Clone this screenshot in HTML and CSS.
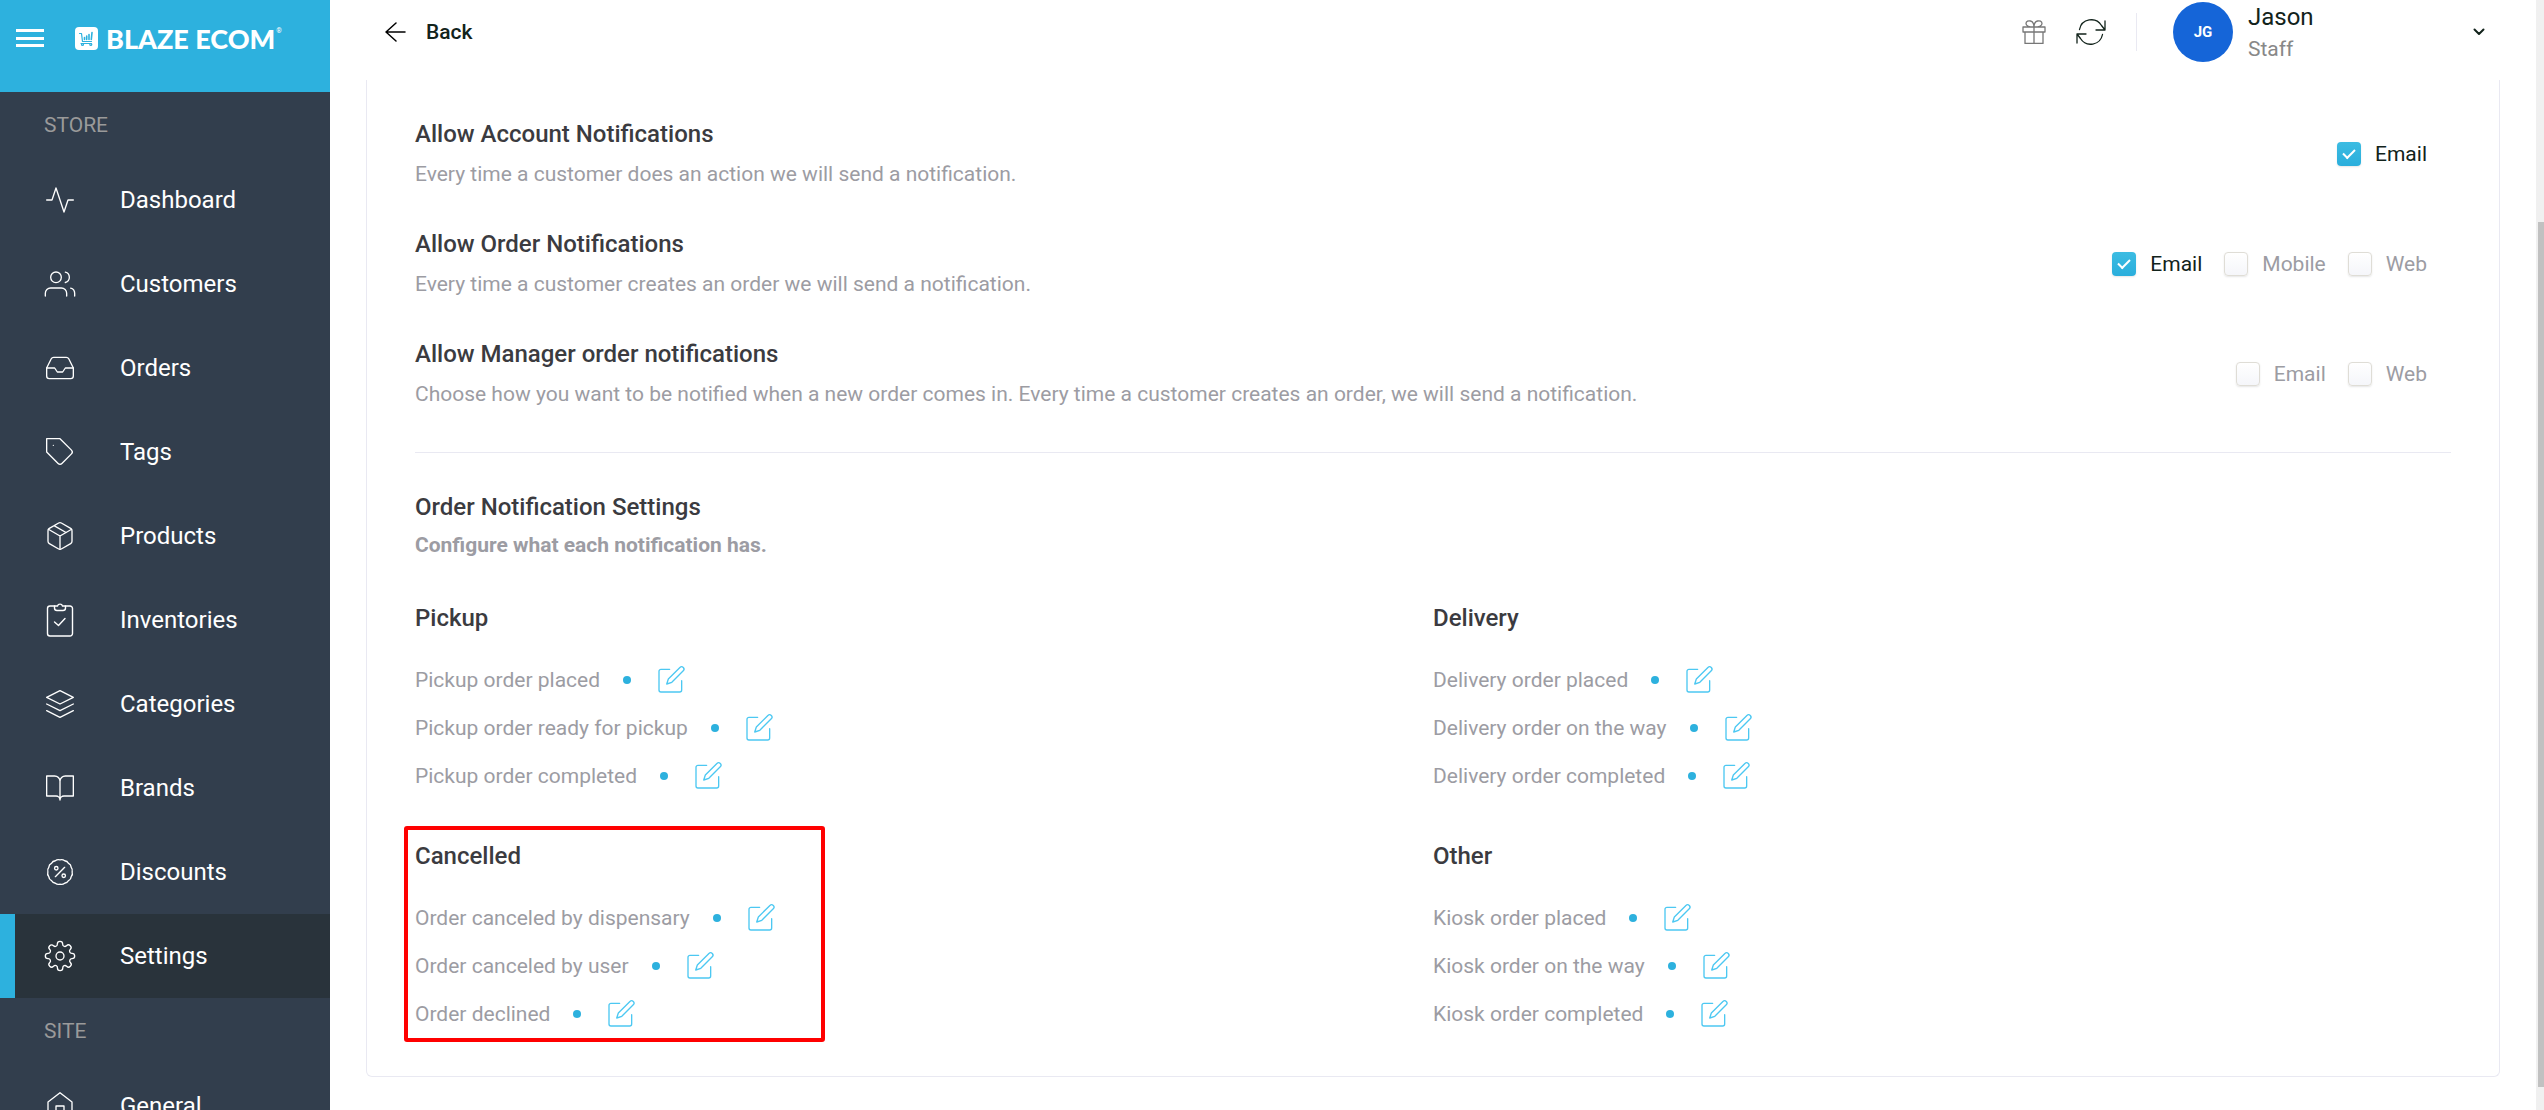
FILE: index.html
```html
<!DOCTYPE html>
<html lang="en">
<head>
  <meta charset="UTF-8">
  <meta name="viewport" content="width=device-width, initial-scale=1">
  <title>Notifications - Blaze Ecom</title>
  <link rel="stylesheet" href="styles.css">
</head>
<body>

<!-- Shared edit icon -->
<svg class="sprite" aria-hidden="true">
  <symbol id="icon-edit" viewBox="0 0 24 24">
    <path d="M11 4H4.500a1.500 1.500 0 0 0-1.500 1.500v14a1.500 1.500 0 0 0 1.500 1.500h14a1.500 1.500 0 0 0 1.500-1.500V12.500"/>
    <path d="M18.700 2.600a1.700 1.700 0 0 1 2.500 2.500L12.600 13.700 8.800 15l1.200-3.800z"/>
  </symbol>
</svg>

<div class="app">

  <!-- Sidebar -->
  <aside class="sidebar">
    <div class="brand">
      <button class="menu-btn" type="button" aria-label="Menu"><span></span><span></span><span></span></button>
      <a class="logo" href="#">
        <svg width="23" height="23" viewBox="0 0 23 23" aria-hidden="true">
          <rect width="23" height="23" rx="4" fill="#fff"/>
          <g fill="none" stroke="#2db1de" stroke-width="1.2" stroke-linecap="round">
            <path d="M4.500 6.500H6.500L7.500 14.500H16.500M6 16.500H16.500"/>
            <path d="M9.500 12.500V10.500M11.700 12.500V9M14 12.500V7.500M16.300 12.500L17 5.500" stroke-width="1.600"/>
            <circle cx="7.500" cy="17.500" r="1"/>
            <circle cx="15.800" cy="17.500" r="1"/>
          </g>
        </svg>
        <span class="logo-text">BLAZE ECOM</span><span class="reg">®</span>
      </a>
    </div>

    <nav>
      <h6 class="nav-title">STORE</h6>
      <a class="nav-item" href="#">
        <svg viewBox="0 0 24 24"><path d="M22 12h-4l-3 9L9 3l-3 9H2"/></svg>
        Dashboard
      </a>
      <a class="nav-item" href="#">
        <svg viewBox="0 0 24 24"><path d="M17 21v-2a4 4 0 0 0-4-4H5a4 4 0 0 0-4 4v2"/><circle cx="9" cy="7" r="4"/><path d="M23 21v-2a4 4 0 0 0-3-3.870M16 3.130a4 4 0 0 1 0 7.750"/></svg>
        Customers
      </a>
      <a class="nav-item" href="#">
        <svg viewBox="0 0 24 24"><path d="M22 12h-6l-2 3h-4l-2-3H2"/><path d="M5.450 5.110L2 12v6a2 2 0 0 0 2 2h16a2 2 0 0 0 2-2v-6l-3.450-6.890A2 2 0 0 0 16.760 4H7.240a2 2 0 0 0-1.790 1.110z"/></svg>
        Orders
      </a>
      <a class="nav-item" href="#">
        <svg viewBox="0 0 24 24"><path d="M20.590 13.410l-7.170 7.170a2 2 0 0 1-2.830 0L2 12V2h10l8.590 8.590a2 2 0 0 1 0 2.820zM7 7h.01"/></svg>
        Tags
      </a>
      <a class="nav-item" href="#">
        <svg viewBox="0 0 24 24"><path d="M16.500 9.400l-9-5.190M21 16V8a2 2 0 0 0-1-1.730l-7-4a2 2 0 0 0-2 0l-7 4A2 2 0 0 0 3 8v8a2 2 0 0 0 1 1.730l7 4a2 2 0 0 0 2 0l7-4A2 2 0 0 0 21 16z"/><path d="M3.270 6.960L12 12.010l8.730-5.050M12 22.080V12"/></svg>
        Products
      </a>
      <a class="nav-item" href="#">
        <svg class="tall" viewBox="0 0 32 36"><path d="M10.500 4H6a2.500 2.500 0 0 0-2.500 2.500v25A2.500 2.500 0 0 0 6 34h20a2.500 2.500 0 0 0 2.500-2.500v-25A2.500 2.500 0 0 0 26 4h-4.500"/><path d="M10.500 4h3a2.600 2.600 0 0 1 5 0h3v2a2.500 2.500 0 0 1-2.500 2.500h-6A2.500 2.500 0 0 1 10.500 6z"/><path d="M10.500 20l4 3.500 6.500-7"/></svg>
        Inventories
      </a>
      <a class="nav-item" href="#">
        <svg viewBox="0 0 24 24"><path d="M12 2L2 7l10 5 10-5-10-5zM2 17l10 5 10-5M2 12l10 5 10-5"/></svg>
        Categories
      </a>
      <a class="nav-item" href="#">
        <svg viewBox="0 0 24 24"><path d="M2 3h6a4 4 0 0 1 4 4v14a3 3 0 0 0-3-3H2zM22 3h-6a4 4 0 0 0-4 4v14a3 3 0 0 1 3-3h7z"/></svg>
        Brands
      </a>
      <a class="nav-item" href="#">
        <svg viewBox="0 0 24 24"><path d="M21.100 12A3.600 3.600 0 0 1 20.410 15.480 3.600 3.600 0 0 1 18.430 18.430 3.600 3.600 0 0 1 15.480 20.410 3.600 3.600 0 0 1 12 21.100 3.600 3.600 0 0 1 8.520 20.410 3.600 3.600 0 0 1 5.570 18.430 3.600 3.600 0 0 1 3.590 15.480 3.600 3.600 0 0 1 2.900 12 3.600 3.600 0 0 1 3.590 8.520 3.600 3.600 0 0 1 5.570 5.570 3.600 3.600 0 0 1 8.520 3.590 3.600 3.600 0 0 1 12 2.900 3.600 3.600 0 0 1 15.480 3.590 3.600 3.600 0 0 1 18.430 5.570 3.600 3.600 0 0 1 20.410 8.520 3.600 3.600 0 0 1 21.100 12z"/><path d="M15.500 8.500l-7 7"/><circle cx="9.200" cy="9.200" r="1.300"/><circle cx="14.800" cy="14.800" r="1.300"/></svg>
        Discounts
      </a>
      <a class="nav-item active" href="#" aria-current="page">
        <svg viewBox="0 0 24 24"><circle cx="12" cy="12" r="3"/><path d="M19.400 15a1.650 1.650 0 0 0 .33 1.820l.06.06a2 2 0 0 1-2.830 2.830l-.06-.06a1.650 1.650 0 0 0-2.820 1.180V21a2 2 0 0 1-4 0v-.09A1.650 1.650 0 0 0 7.180 19.650l-.06.06a2 2 0 0 1-2.830-2.830l.06-.06A1.650 1.650 0 0 0 3.090 14H3a2 2 0 0 1 0-4h.09a1.650 1.650 0 0 0 1.260-2.820l-.06-.06a2 2 0 0 1 2.830-2.830l.06.06A1.650 1.650 0 0 0 10 3.090V3a2 2 0 0 1 4 0v.09a1.650 1.650 0 0 0 2.820 1.260l.06-.06a2 2 0 0 1 2.830 2.830l-.06.06A1.650 1.650 0 0 0 20.910 10H21a2 2 0 0 1 0 4h-.09a1.650 1.650 0 0 0-1.510 1z"/></svg>
        Settings
      </a>

      <h6 class="nav-title">SITE</h6>
      <a class="nav-item" href="#">
        <svg viewBox="0 0 24 24"><path d="M3 9l9-7 9 7v11a2 2 0 0 1-2 2H5a2 2 0 0 1-2-2z"/><path d="M9 22V12h6v10"/></svg>
        General
      </a>
    </nav>
  </aside>

  <!-- Main column -->
  <div class="main">
    <header class="topbar">
      <a class="back" href="#">
        <svg width="22" height="22" viewBox="0 0 22 22" aria-hidden="true"><path d="M20 11H1M11 2l-10 9 10 9"/></svg>
        Back
      </a>
      <div class="tools">
        <button class="icon-btn gift" type="button" aria-label="What's new">
          <svg width="24" height="24" viewBox="0 0 24 24"><path d="M1 7h22v5H1zM3 12v11.500h18V12M12 7v16.500M12 7C8 7 4 6 4 3.500S6.500.500 8.500 1 12 4 12 7c0-3 1.500-5.500 3.500-6S20 1 20 3.500 16 7 12 7"/></svg>
        </button>
        <button class="icon-btn" type="button" aria-label="Refresh">
          <svg width="30" height="26" viewBox="0 0 30 26"><path d="M29 2v9h-9M3.500 10.500A12 12 0 0 1 25.500 6.500L29 11M1 24v-9h9M26.500 15.500A12 12 0 0 1 4.500 19.500L1 15"/></svg>
        </button>
        <button class="user" type="button">
          <span class="avatar">JG</span>
          <span class="user-info">
            <span class="user-name">Jason</span>
            <span class="user-role">Staff</span>
          </span>
          <svg width="12" height="8" viewBox="0 0 12 8" aria-hidden="true"><path d="M1.500 1.500L6 6l4.500-4.500"/></svg>
        </button>
      </div>
    </header>

    <main class="card">
      <section class="toggles">
        <div class="toggle-row">
          <div>
            <h3>Allow Account Notifications</h3>
            <p>Every time a customer does an action we will send a notification.</p>
          </div>
          <div class="checks">
            <label><input type="checkbox" checked><span>Email</span></label>
          </div>
        </div>
        <div class="toggle-row">
          <div>
            <h3>Allow Order Notifications</h3>
            <p>Every time a customer creates an order we will send a notification.</p>
          </div>
          <div class="checks">
            <label><input type="checkbox" checked><span>Email</span></label>
            <label><input type="checkbox"><span>Mobile</span></label>
            <label><input type="checkbox"><span>Web</span></label>
          </div>
        </div>
        <div class="toggle-row">
          <div>
            <h3>Allow Manager order notifications</h3>
            <p>Choose how you want to be notified when a new order comes in. Every time a customer creates an order, we will send a notification.</p>
          </div>
          <div class="checks">
            <label><input type="checkbox"><span>Email</span></label>
            <label><input type="checkbox"><span>Web</span></label>
          </div>
        </div>
      </section>

      <section class="order-settings">
        <h3>Order Notification Settings</h3>
        <p class="hint">Configure what each notification has.</p>

        <div class="groups">
          <div class="group">
            <h3>Pickup</h3>
            <ul>
              <li>Pickup order placed <i class="dot"></i><button type="button" aria-label="Edit"><svg><use href="#icon-edit"/></svg></button></li>
              <li>Pickup order ready for pickup <i class="dot"></i><button type="button" aria-label="Edit"><svg><use href="#icon-edit"/></svg></button></li>
              <li>Pickup order completed <i class="dot"></i><button type="button" aria-label="Edit"><svg><use href="#icon-edit"/></svg></button></li>
            </ul>
          </div>
          <div class="group">
            <h3>Delivery</h3>
            <ul>
              <li>Delivery order placed <i class="dot"></i><button type="button" aria-label="Edit"><svg><use href="#icon-edit"/></svg></button></li>
              <li>Delivery order on the way <i class="dot"></i><button type="button" aria-label="Edit"><svg><use href="#icon-edit"/></svg></button></li>
              <li>Delivery order completed <i class="dot"></i><button type="button" aria-label="Edit"><svg><use href="#icon-edit"/></svg></button></li>
            </ul>
          </div>
          <div class="group marked">
            <h3>Cancelled</h3>
            <ul>
              <li>Order canceled by dispensary <i class="dot"></i><button type="button" aria-label="Edit"><svg><use href="#icon-edit"/></svg></button></li>
              <li>Order canceled by user <i class="dot"></i><button type="button" aria-label="Edit"><svg><use href="#icon-edit"/></svg></button></li>
              <li>Order declined <i class="dot"></i><button type="button" aria-label="Edit"><svg><use href="#icon-edit"/></svg></button></li>
            </ul>
          </div>
          <div class="group">
            <h3>Other</h3>
            <ul>
              <li>Kiosk order placed <i class="dot"></i><button type="button" aria-label="Edit"><svg><use href="#icon-edit"/></svg></button></li>
              <li>Kiosk order on the way <i class="dot"></i><button type="button" aria-label="Edit"><svg><use href="#icon-edit"/></svg></button></li>
              <li>Kiosk order completed <i class="dot"></i><button type="button" aria-label="Edit"><svg><use href="#icon-edit"/></svg></button></li>
            </ul>
          </div>
        </div>
      </section>
    </main>
  </div>

  <!-- Scroll track -->
  <div class="scrollbar"><div class="thumb"></div></div>
</div>

</body>
</html>
```
FILE: styles.css
```css
*, *::before, *::after {
  box-sizing: border-box;
}
body {
  margin: 0;
  font-family: Roboto, "Liberation Sans", sans-serif;
  font-size: 21px;
  color: #9c9ca3;
  background: #fff;
}
h3, h6, p, ul {
  margin: 0;
  padding: 0;
}
a {
  color: inherit;
  text-decoration: none;
}
button {
  padding: 0;
  border: none;
  background: none;
  font: inherit;
  color: inherit;
  cursor: pointer;
}
svg {
  display: block;
  fill: none;
  stroke: currentColor;
  stroke-linecap: round;
  stroke-linejoin: round;
}
.sprite {
  display: none;
}
.app {
  display: flex;
  height: 100vh;
  overflow: hidden;
}

/* Sidebar */
.sidebar {
  flex: 0 0 330px;
  overflow: hidden;
  background: #323e4d;
  color: #fff;
}
.brand {
  display: flex;
  gap: 31px;
  height: 92px;
  padding: 27px 16px;
  background: #2db1de;
}
.menu-btn {
  display: flex;
  flex-direction: column;
  justify-content: space-between;
  width: 28px;
  height: 18px;
  margin-top: 2px;
}
.menu-btn span {
  width: 28px;
  height: 3px;
  background: #fff;
}
.logo {
  display: flex;
  height: 23px;
}
.logo svg {
  stroke: none;
}
.logo-text {
  margin-left: 8px;
  font: 900 27px/24px Lato, sans-serif;
}
.reg {
  font-size: 7px;
  line-height: 8px;
  margin-left: 1px;
}
.nav-title {
  height: 66px;
  padding-left: 44px;
  font-size: 21px;
  font-weight: 400;
  line-height: 66px;
  color: #9a9a9a;
}
.nav-item {
  display: flex;
  align-items: center;
  gap: 44px;
  height: 84px;
  padding-left: 44px;
  font-size: 24px;
}
.nav-item svg {
  width: 32px;
  height: 32px;
  stroke-width: 1;
}
.nav-item .tall {
  height: 36px;
  stroke-width: 1.4;
}
.nav-item.active {
  padding-left: 29px;
  border-left: 15px solid #2db1de;
  background: #29333b;
}

/* Top bar */
.main {
  flex: 1;
  min-width: 0;
}
.topbar {
  display: flex;
  justify-content: space-between;
  height: 80px;
  padding: 0 51px 16px 55px;
  color: #12231b;
}
.back {
  display: flex;
  align-items: center;
  gap: 19px;
  font-weight: 500;
}
.back svg {
  stroke: #000;
  stroke-width: 1.5;
}
.tools {
  display: flex;
  align-items: center;
}
.icon-btn {
  margin-right: 30px;
}
.icon-btn svg {
  stroke-width: 1.3;
}
.gift {
  color: #777;
}
.user {
  display: flex;
  align-items: center;
  width: 349px;
  padding-left: 37px;
  background: linear-gradient(#e9e9f2, #e9e9f2) left center / 1px 38px no-repeat;
  text-align: left;
}
.avatar {
  width: 60px;
  height: 60px;
  border-radius: 50%;
  background: #1565d8;
  color: #fff;
  font-size: 15px;
  font-weight: 700;
  line-height: 60px;
  text-align: center;
}
.user-info {
  flex: 1;
  display: flex;
  flex-direction: column;
  margin-left: 15px;
  padding-top: 2px;
  line-height: 32px;
}
.user-name {
  font-size: 24px;
}
.user-role {
  color: #888;
}
.user svg {
  stroke-width: 2;
}

/* Card */
.card {
  margin: 0 36px;
  padding: 19px 48px 38px;
  border: 1px solid #e9e9f2;
  border-top: none;
  border-radius: 0 0 6px 6px;
}
h3 {
  font-size: 24px;
  font-weight: 500;
  line-height: 40px;
  color: #3b3b40;
}
.toggles {
  padding-bottom: 23px;
  border-bottom: 1px solid #e9e9f2;
}
.toggle-row {
  display: flex;
  align-items: center;
  justify-content: space-between;
  height: 110px;
  padding-right: 24px;
}
.toggle-row p {
  line-height: 40px;
}
.checks {
  display: flex;
  gap: 22px;
}
.checks label {
  display: flex;
  align-items: center;
  gap: 14px;
}
input:checked + span {
  color: #12231b;
}
input[type="checkbox"] {
  appearance: none;
  display: grid;
  place-content: center;
  width: 24px;
  height: 24px;
  margin: 0;
  border: 1px solid #dfddd6;
  border-radius: 4px;
  background: linear-gradient(#fff, #f5f6fa);
  box-shadow: 0 1px 2px rgba(0, 0, 0, 0.1);
}
input[type="checkbox"]:checked {
  border: none;
  background: linear-gradient(#3cbce2, #2aaedc);
}
input[type="checkbox"]:checked::after {
  content: "";
  width: 12px;
  height: 7px;
  margin-bottom: 3px;
  border-left: 2px solid #fff;
  border-bottom: 2px solid #fff;
  transform: rotate(-45deg);
}

/* Order notification groups */
.order-settings {
  padding-top: 34px;
}
.hint {
  font-weight: 700;
  line-height: 36px;
}
.groups {
  display: grid;
  grid-template-columns: 1fr 1fr;
  row-gap: 36px;
  margin-top: 35px;
}
.group {
  position: relative;
}
.group h3 {
  margin-bottom: 18px;
}
.group li {
  display: flex;
  align-items: center;
  height: 48px;
}
.dot {
  width: 8px;
  height: 8px;
  margin: 0 24px 0 23px;
  border-radius: 50%;
  background: #2db1de;
}
.group li svg {
  width: 32px;
  height: 32px;
  color: #4cc8f2;
  stroke-width: 1;
}
.marked::before {
  content: "";
  position: absolute;
  top: -10px;
  left: -11px;
  width: 421px;
  height: 216px;
  border: 4px solid #f00;
  border-radius: 3px;
  pointer-events: none;
}

/* Scroll track */
.scrollbar {
  flex: 0 0 8px;
  padding: 222px 0 23px 2px;
  background: #f0f0f0;
}
.thumb {
  height: 100%;
  background: #c1c1c1;
}
```
